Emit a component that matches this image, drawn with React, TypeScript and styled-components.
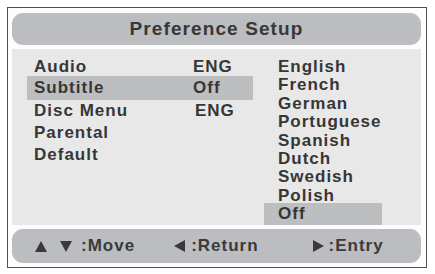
import React from 'react'
import styled, { createGlobalStyle } from 'styled-components'

const GlobalStyle = createGlobalStyle`
    html, body {
        margin: 0;
        padding: 0;
        background: #ffffff;
    }
    body {
        font-family: "Liberation Sans", Arial, sans-serif;
        color: #363636;
    }
`

const Frame = styled.div`
    margin: 7px 0 0 7px;
    width: 420px;
    height: 261px;
    box-sizing: border-box;
    border: 1px solid #505050;
    padding: 5px 5px 4px 4px;
    display: flex;
    flex-direction: column;
    gap: 4px;
    background: #fdfdfd;
`

const Header = styled.div`
    height: 32px;
    border-radius: 11px;
    background: #bcbdc0;
    display: flex;
    align-items: center;
    justify-content: center;
    font-size: 19px;
    font-weight: 700;
    letter-spacing: 1.1px;
    color: #383838;
`

const Panel = styled.div`
    height: 177px;
    background: #e8e8e9;
    display: grid;
    grid-template-columns: 226px 118px;
    column-gap: 11px;
    padding-left: 15px;
    box-sizing: border-box;
    font-size: 17px;
    font-weight: 700;
    letter-spacing: 1px;
`

const Menu = styled.div`
    padding-top: 7px;
    display: flex;
    flex-direction: column;
`

const MenuRow = styled.div<{ $active?: boolean }>`
    height: 22px;
    display: grid;
    grid-template-columns: 159px 1fr;
    align-items: center;
    padding-left: 7px;
    ${({ $active }) =>
        $active &&
        `
        height: 24px;
        margin-top: -2px;
        background: #bdbec0;
    `}
`

const Value = styled.span<{ $shift?: number }>`
    padding-left: ${({ $shift }) => $shift ?? 0}px;
`

const Options = styled.div`
    padding-top: 9px;
    display: flex;
    flex-direction: column;
`

const Option = styled.div<{ $active?: boolean }>`
    line-height: 18.4px;
    padding-left: 14px;
    ${({ $active }) =>
        $active &&
        `
        flex: 1;
        margin-top: -2px;
        padding-top: 2px;
        background: #bdbec0;
    `}
`

const Footer = styled.div`
    height: 34px;
    border-radius: 11px;
    background: #bcbdc0;
    display: flex;
    align-items: center;
    padding-left: 23px;
    font-size: 17px;
    font-weight: 700;
    letter-spacing: 1px;
    color: #3a3a3a;
`

const Hint = styled.div<{ $gap: number; $offset?: number }>`
    display: flex;
    align-items: center;
    gap: ${({ $gap }) => $gap}px;
    margin-left: ${({ $offset }) => $offset ?? 0}px;
`

const Arrow = ({ dir }: { dir: 'up' | 'down' | 'left' | 'right' }) => {
    const pts = {
        up: '6,0 12,11 0,11',
        down: '0,0 12,0 6,11',
        left: '11,0 11,12 0,6',
        right: '0,0 11,6 0,12',
    }[dir]
    const w = dir === 'up' || dir === 'down' ? 12 : 11
    const h = dir === 'up' || dir === 'down' ? 11 : 12
    return (
        <svg width={w} height={h} viewBox={`0 0 ${w} ${h}`}>
            <polygon points={pts} fill="#3a3a3a" />
        </svg>
    )
}

const menu = [
    { label: 'Audio', value: 'ENG' },
    { label: 'Subtitle', value: 'Off', active: true },
    { label: 'Disc Menu', value: 'ENG', shift: 2 },
    { label: 'Parental', value: '' },
    { label: 'Default', value: '' },
]

const languages = ['English', 'French', 'German', 'Portuguese', 'Spanish', 'Dutch', 'Swedish', 'Polish', 'Off']

export default function App() {
    return (
        <>
            <GlobalStyle />
            <Frame>
                <Header>Preference Setup</Header>
                <Panel>
                    <Menu>
                        {menu.map((m) => (
                            <MenuRow key={m.label} $active={m.active}>
                                <span>{m.label}</span>
                                <Value $shift={m.shift}>{m.value}</Value>
                            </MenuRow>
                        ))}
                    </Menu>
                    <Options>
                        {languages.map((l) => (
                            <Option key={l} $active={l === 'Off'}>
                                {l}
                            </Option>
                        ))}
                    </Options>
                </Panel>
                <Footer>
                    <Hint $gap={9}>
                        <Hint $gap={13}>
                            <Arrow dir="up" />
                            <Arrow dir="down" />
                        </Hint>
                        <span>:Move</span>
                    </Hint>
                    <Hint $gap={6} $offset={39}>
                        <Arrow dir="left" />
                        <span>:Return</span>
                    </Hint>
                    <Hint $gap={5} $offset={54}>
                        <Arrow dir="right" />
                        <span>:Entry</span>
                    </Hint>
                </Footer>
            </Frame>
        </>
    )
}
